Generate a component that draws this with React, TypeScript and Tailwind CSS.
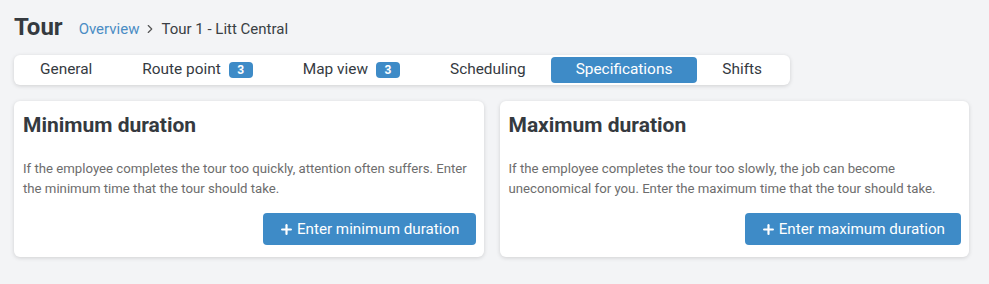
import { Plus, ChevronRight } from "lucide-react";

const tabs = [
  { label: "General" },
  { label: "Route point", count: 3 },
  { label: "Map view", count: 3 },
  { label: "Scheduling" },
  { label: "Specifications", active: true },
  { label: "Shifts" },
];

function DurationCard({ title, text, action }: { title: string; text: string; action: string }) {
  return (
    <div className="flex-1 bg-white rounded-md shadow-[0_1px_4px_rgba(0,0,0,0.15)] pl-[9px] pr-[8px] pt-[10px] pb-[12px] flex flex-col">
      <h2 className="text-[21px] leading-[28px] font-bold text-[#353a3f]">{title}</h2>
      <p className="mt-[20px] text-[13.2px] leading-[20px] text-[#6d6d6d]">{text}</p>
      <div className="flex justify-end mt-[14px]">
        <button className="h-[32px] pl-[16px] pr-[16px] rounded bg-[#3e8bc7] text-white text-[15.2px] flex items-center gap-[3px]">
          <Plus className="w-[15px] h-[15px]" strokeWidth={3.5} />
          {action}
        </button>
      </div>
    </div>
  );
}

export default function App() {
  return (
    <div className="min-h-screen bg-[#f3f4f6] px-[14px] pt-[12px] pr-[20px] font-['Roboto',sans-serif]">
      <div className="flex items-end gap-[16px] h-[30px]">
        <h1 className="text-[24px] leading-[30px] font-bold text-[#353a3f]">Tour</h1>
        <div className="flex items-center text-[15px] leading-[24px] pb-[1px] text-[#3a3f44]">
          <span className="text-[#4a8cc4]">Overview</span>
          <ChevronRight className="w-[14px] h-[14px] mx-[4px] text-[#555]" />
          <span>Tour 1 - Litt Central</span>
        </div>
      </div>

      <div className="mt-[13px] inline-flex items-center bg-white rounded-md shadow-[0_1px_4px_rgba(0,0,0,0.15)] py-[2px] pl-[1px] pr-[3px] h-[30px]">
        {tabs.map((t) => (
          <div
            key={t.label}
            className={
              t.active
                ? "h-[26px] px-[25px] rounded bg-[#3e8bc7] text-white text-[15.4px] flex items-center"
                : "h-[26px] px-[25px] text-[15.4px] text-[#353a3f] flex items-center"
            }
          >
            {t.label}
            {t.count !== undefined && (
              <span className="ml-[8px] h-[16px] w-[24px] text-center rounded bg-[#3e8bc7] text-white text-[12px] font-bold leading-[16px]">
                {t.count}
              </span>
            )}
          </div>
        ))}
      </div>

      <div className="mt-[16px] flex gap-[16px]">
        <DurationCard
          title="Minimum duration"
          text="If the employee completes the tour too quickly, attention often suffers. Enter the minimum time that the tour should take."
          action="Enter minimum duration"
        />
        <DurationCard
          title="Maximum duration"
          text="If the employee completes the tour too slowly, the job can become uneconomical for you. Enter the maximum time that the tour should take."
          action="Enter maximum duration"
        />
      </div>
    </div>
  );
}
